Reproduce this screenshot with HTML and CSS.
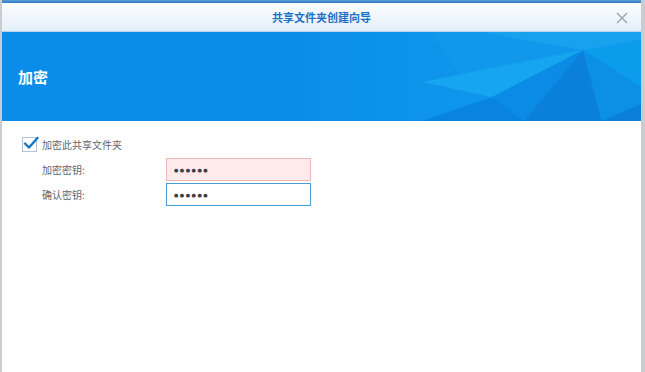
FILE: index.html
```html
<!DOCTYPE html>
<html lang="zh">
<head>
<meta charset="utf-8">
<link rel="stylesheet" href="styles.css">
</head>
<body>
<div class="window">
  <div class="topstrip"></div>
  <div class="titlebar">
    <span class="title">共享文件夹创建向导</span>
    <svg class="close" width="12" height="12" viewBox="0 0 12 12"><path d="M1 1L11 11M11 1L1 11" stroke="#9aa3ab" stroke-width="1.3" fill="none"/></svg>
  </div>
  <div class="banner">
    <svg class="banner-art" viewBox="0 0 639 89" preserveAspectRatio="none">
      <defs>
        <linearGradient id="g" x1="0" y1="0" x2="1" y2="0">
          <stop offset="0.45" stop-color="#0a8de8"/>
          <stop offset="0.75" stop-color="#0e96ec"/>
        </linearGradient>
      </defs>
      <rect x="0" y="0" width="639" height="89" fill="url(#g)"/>
      <polygon points="430,0 639,0 581,18 470,60" fill="#1099ec"/>
      <polygon points="480,0 639,0 639,8 581,18" fill="#18a2ee"/>
      <polygon points="581,18 639,8 639,55" fill="#0c9cec"/>
      <polygon points="420,50 581,18 490,65" fill="#16a6f0"/>
      <polygon points="581,18 490,65 522,89" fill="#0b8ce4"/>
      <polygon points="581,18 522,89 600,89" fill="#0a80da"/>
      <polygon points="581,18 600,89 639,89 639,55" fill="#0b90e6"/>
      <polygon points="490,65 420,89 522,89" fill="#0984de"/>
      <polygon points="600,89 639,72 639,89" fill="#0a7ed8"/>
    </svg>
    <h1 class="banner-title">加密</h1>
  </div>
  <div class="content">
    <label class="check-row">
      <span class="checkbox">
        <svg width="16" height="14" viewBox="0 0 16 14"><path d="M2 7.5L6 11.5L14.5 2" stroke="#1576c8" stroke-width="2.4" fill="none" stroke-linecap="round" stroke-linejoin="round"/></svg>
      </span>
      <span class="check-label">加密此共享文件夹</span>
    </label>
    <div class="field">
      <span class="field-label">加密密钥:</span>
      <div class="input input-error">●●●●●●</div>
    </div>
    <div class="field">
      <span class="field-label">确认密钥:</span>
      <div class="input input-focus">●●●●●●</div>
    </div>
  </div>
</div>
</body>
</html>
```

FILE: styles.css
```css
html, body {
  margin: 0;
  padding: 0;
  background: #ffffff;
}
body {
  font-family: "Noto Sans CJK SC", "Noto Sans", sans-serif;
}
.window {
  width: 645px;
  height: 372px;
  box-sizing: border-box;
  border-left: 2px solid #c9cdd1;
  border-right: 4px solid #c9cdd1;
  display: flex;
  flex-direction: column;
  overflow: hidden;
}
.topstrip {
  height: 3px;
  background: linear-gradient(to bottom, #5a9fd8, #2d78c4);
  flex: none;
}
.titlebar {
  height: 28px;
  flex: none;
  position: relative;
  display: flex;
  align-items: center;
  justify-content: center;
  background: linear-gradient(to bottom, #fbfdff, #e4eff9);
  border-bottom: 1px solid #b9d3ea;
}
.title {
  font-size: 11px;
  font-weight: 700;
  color: #1a70c6;
}
.close {
  position: absolute;
  right: 13px;
  top: 9px;
}
.banner {
  position: relative;
  height: 89px;
  flex: none;
  background: #0a8de8;
  display: flex;
  align-items: center;
  padding-left: 16px;
  overflow: hidden;
}
.banner-art {
  position: absolute;
  left: 0;
  top: 0;
  width: 100%;
  height: 100%;
}
.banner-title {
  position: relative;
  margin: 0;
  font-size: 15px;
  font-weight: 700;
  color: #ffffff;
}
.content {
  flex: 1;
  padding: 15px 0 0 20px;
  display: flex;
  flex-direction: column;
}
.check-row {
  display: flex;
  align-items: center;
  height: 16px;
  margin-bottom: 4px;
}
.checkbox {
  width: 15px;
  height: 15px;
  box-sizing: border-box;
  border: 1px solid #b8c4d0;
  background: #fff;
  position: relative;
  margin-right: 5px;
}
.checkbox svg {
  position: absolute;
  left: 0;
  top: -2px;
}
.check-label, .field-label {
  font-size: 10px;
  color: #62676d;
}
.field {
  display: flex;
  align-items: center;
  height: 23px;
  margin-top: 2px;
  padding-left: 20px;
}
.field-label {
  width: 124px;
}
.input {
  width: 145px;
  height: 23px;
  box-sizing: border-box;
  padding-left: 7px;
  display: flex;
  align-items: center;
  font-size: 5px;
  letter-spacing: 1.5px;
  color: #3a3f46;
  font-family: "DejaVu Sans", sans-serif;
}
.input-error {
  background: #fdeaea;
  border: 1px solid #f0b5b5;
}
.input-focus {
  background: #fff;
  border: 1px solid #4a9ed6;
}
```
